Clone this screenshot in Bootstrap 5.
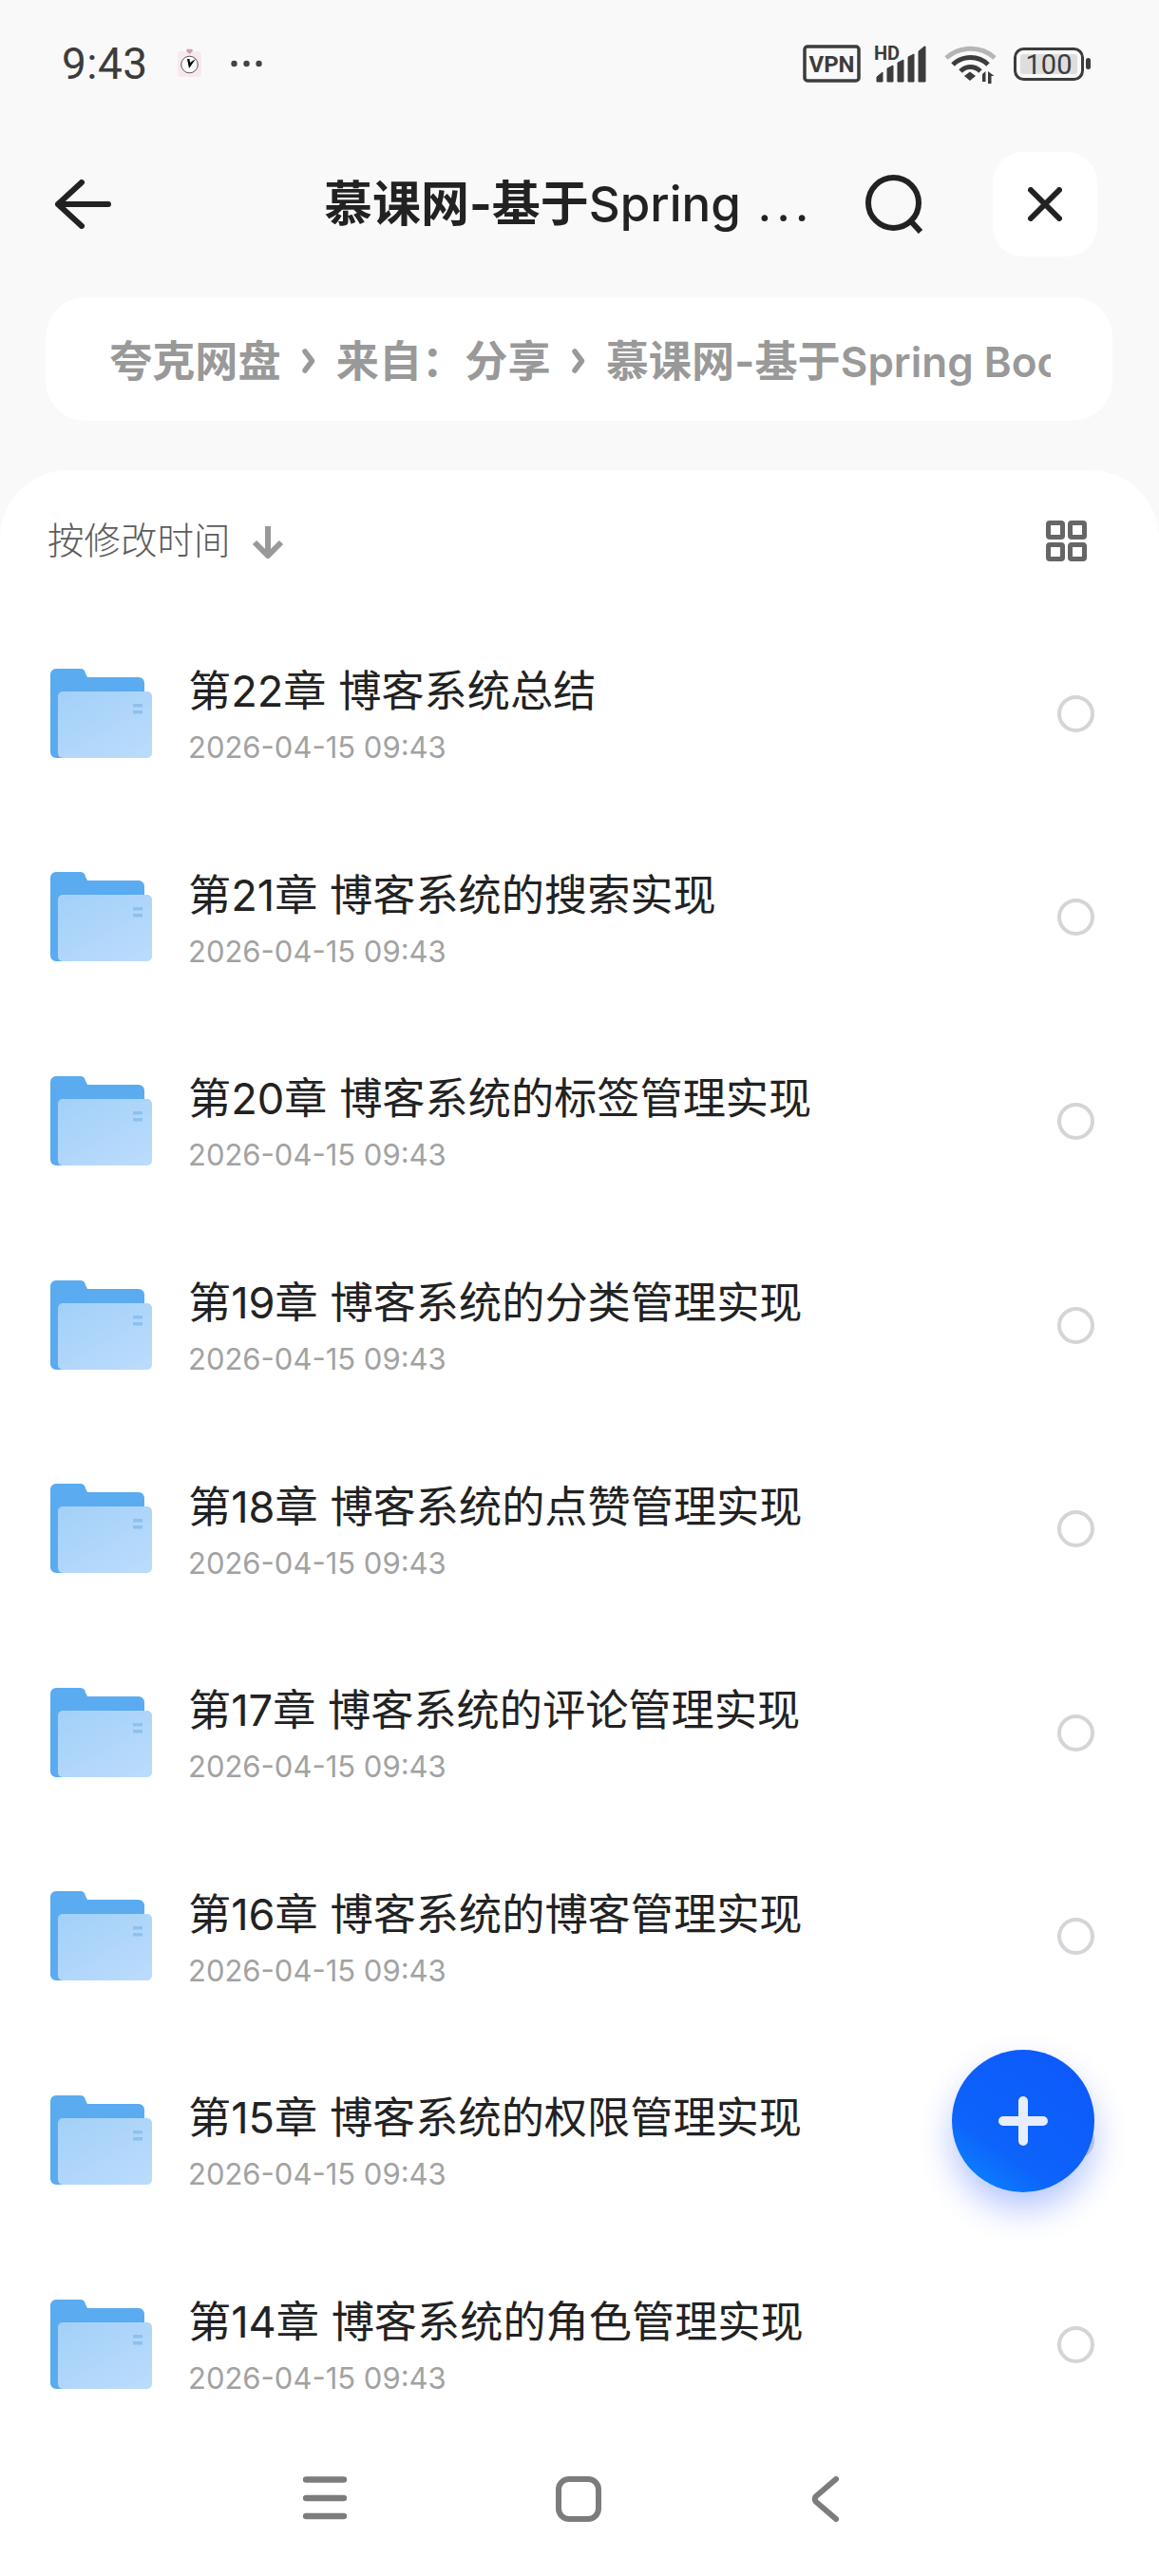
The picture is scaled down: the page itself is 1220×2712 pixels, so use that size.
<!DOCTYPE html>
<html lang="zh-CN">
<head>
    <meta charset="UTF-8">
    <meta name="viewport" content="width=device-width, initial-scale=1.0">
    <title>夸克网盘</title>
    <link href="https://cdn.jsdelivr.net/npm/bootstrap@5.3.0/dist/css/bootstrap.min.css" rel="stylesheet">
    <style>
        html, body {
            height: 2712px;
            overflow: hidden;
        }
        body {
            position: relative;
            background: #f9f9f9;
            font-family: Inter, "Noto Sans CJK SC", sans-serif;
            color: #222;
        }
        svg {
            display: block;
            flex: none;
        }
        .status-bar {
            height: 160px;
            padding: 0 72px 0 65px;
            color: #3c3c3c;
        }
        .status-time {
            font-family: Roboto, sans-serif;
            font-size: 46px;
            line-height: 1;
            padding-top: 44px;
            width: 122px;
            letter-spacing: .5px;
        }
        .status-stopwatch {
            margin-top: 51px;
        }
        .status-dots {
            margin: 63px 0 0 30px;
        }
        .status-icons {
            padding-top: 47px;
        }
        .status-icons text {
            font-family: Roboto, sans-serif;
        }
        .status-signal {
            margin: 0 0 0 14px;
        }
        .status-wifi {
            margin-left: 15px;
        }
        .status-battery {
            margin: 3px 0 0 18px;
        }
        .top-bar {
            height: 110px;
            padding: 0 65px 0 58px;
        }
        .top-title {
            width: 572px;
            margin-left: 224px;
            font-size: 51px;
            font-weight: 500;
            line-height: 110px;
            white-space: nowrap;
            color: #222;
        }
        .top-title b {
            font-weight: 700;
        }
        .top-title span {
            margin-left: 4px;
            letter-spacing: 5px;
            font-weight: 400;
        }
        .close-box {
            width: 110px;
            height: 110px;
            margin-left: 72px;
            background: #fff;
            border-radius: 32px;
        }
        .crumb-bar {
            height: 130px;
            margin: 43px 49px 0 48px;
            padding-left: 67px;
            background: #fff;
            border-radius: 42px;
        }
        .crumb-text {
            width: 991px;
            padding-top: 5px;
            overflow: hidden;
            white-space: nowrap;
            font-size: 45.200px;
            font-weight: 700;
            color: #999;
            gap: 22px;
        }
        .crumb-text i {
            font-style: normal;
            font-size: 44px;
            font-weight: 600;
        }
        .sheet {
            margin-top: 52px;
            height: 2217px;
            background: #fff;
            border-radius: 72px 72px 0 0;
        }
        .sort-row {
            height: 149px;
            padding: 0 76px 0 50px;
            font-size: 38.500px;
            font-weight: 300;
            color: #5c5c5c;
        }
        .sort-arrow {
            margin-left: 22px;
        }
        .file-row {
            height: 214.6px;
            padding: 0 68px 0 53px;
        }
        .file-info {
            margin-left: 37px;
            padding-top: 4px;
        }
        .file-title {
            font-size: 45.200px;
            line-height: 58px;
            color: #222;
        }
        .file-date {
            font-size: 31px;
            line-height: 40px;
            margin-top: 10px;
            color: #a2a2a2;
        }
        .pick-ring {
            width: 39px;
            height: 39px;
            border: 4px solid #d4d5d8;
            border-radius: 50%;
        }
        .bottom-nav {
            height: 137px;
            padding: 32px 335px 0 319px;
        }
        .add-btn {
            position: absolute;
            left: 1002px;
            top: 2158px;
            width: 150px;
            height: 150px;
            border-radius: 50%;
            background: linear-gradient(35deg, #0a8dff 0%, #0d63fb 32%, #0d58fb 100%);
            box-shadow: 0 18px 34px rgba(30, 80, 250, .32);
        }
    </style>
</head>
<body>
    <div class="status-bar d-flex justify-content-between">
        <div class="d-flex align-items-start">
            <div class="status-time">9:43</div>
            <svg class="status-stopwatch" width="26" height="30" viewBox="0 0 26 30">
                <rect x="0" y="3" width="25" height="27" rx="4" fill="#f8e9ee"/>
                <path d="M12.5 6 L9 2.5 a2.2 2.2 0 0 1 3.5-1.6 a2.2 2.2 0 0 1 3.5 1.6z" fill="#cf9db2"/>
                <circle cx="12.5" cy="17" r="8.8" fill="#fff" stroke="#555" stroke-width="1"/>
                <path d="M10 11 L12 21 L19 11 L13 15 L12.5 11z" fill="#000"/>
            </svg>
            <svg class="status-dots" width="33" height="8" viewBox="0 0 33 8">
                <circle cx="3.500" cy="4" r="3.200" fill="#444"/>
                <circle cx="16.500" cy="4" r="3.200" fill="#444"/>
                <circle cx="29.500" cy="4" r="3.200" fill="#444"/>
            </svg>
        </div>
        <div class="status-icons d-flex align-items-start">
            <svg width="61" height="40" viewBox="0 0 61 40">
                <rect x="2" y="2" width="57" height="36" rx="3" fill="none" stroke="#3c3c3c" stroke-width="3.500"/>
                <text x="30.500" y="28.500" text-anchor="middle" font-size="24" font-weight="700" fill="#3c3c3c">VPN</text>
            </svg>
            <svg class="status-signal" width="59" height="40" viewBox="0 0 59 40">
                <text x="0" y="16" font-size="20" font-weight="700" fill="#3c3c3c">HD</text>
                <path d="M3 39v-5l6-5v10z M14 39v-14l6-3v17z M25 39v-20l6-3v23z M36 39v-26l6-3v29z M47 39v-32l6-5h1v37z" fill="#3c3c3c" stroke="#3c3c3c" stroke-width="1" stroke-linejoin="round"/>
            </svg>
            <svg class="status-wifi" width="55" height="41" viewBox="0 0 55 41">
                <path d="M2 14 C16 1 39 1 53 14" fill="none" stroke="#b5b5b5" stroke-width="5"/>
                <path d="M9 21 C19 11 36 11 46 21" fill="none" stroke="#3c3c3c" stroke-width="5"/>
                <path d="M17 28 C23 22 32 22 38 28" fill="none" stroke="#3c3c3c" stroke-width="5"/>
                <path d="M21 33 L27 28.500 L33 33 L27 38z" fill="#3c3c3c"/>
                <path d="M40 31v8h3.500v-11z M46 28v13h3.500v-8l3 0z" fill="#3c3c3c"/>
            </svg>
            <svg class="status-battery" width="81" height="35" viewBox="0 0 81 35">
                <rect x="1.500" y="1.500" width="71" height="32" rx="9" fill="none" stroke="#3c3c3c" stroke-width="3"/>
                <rect x="7" y="7" width="60" height="21" rx="3" fill="#dedede"/>
                <text x="37" y="28" text-anchor="middle" font-size="29" fill="#3c3c3c">100</text>
                <rect x="76" y="11" width="5" height="12" rx="2.500" fill="#3c3c3c"/>
            </svg>
        </div>
    </div>

    <div class="top-bar d-flex align-items-center">
        <svg width="59" height="52" viewBox="0 0 59 52">
            <path d="M28 3 L3 26 L28 49 M3 26 H56" fill="none" stroke="#222" stroke-width="6" stroke-linecap="round" stroke-linejoin="round"/>
        </svg>
        <div class="top-title"><b>慕课网-基于</b>Spring <span>...</span></div>
        <svg width="62" height="62" viewBox="0 0 62 62">
            <circle cx="29.500" cy="29.500" r="26.500" fill="none" stroke="#222" stroke-width="6"/>
            <path d="M47 48 L58 60" fill="none" stroke="#222" stroke-width="6"/>
        </svg>
        <div class="close-box d-flex align-items-center justify-content-center">
            <svg width="36" height="36" viewBox="0 0 36 36">
                <path d="M3 3 L33 33 M33 3 L3 33" fill="none" stroke="#222" stroke-width="6" stroke-linecap="round"/>
            </svg>
        </div>
    </div>

    <div class="crumb-bar d-flex align-items-center">
        <div class="crumb-text d-flex align-items-center">
            <span>夸克网盘</span>
            <svg width="14" height="26" viewBox="0 0 14 26"><path d="M3 3 L10.500 13 L3 23" fill="none" stroke="#999" stroke-width="5.500" stroke-linecap="round" stroke-linejoin="round"/></svg>
            <span>来自：分享</span>
            <svg width="14" height="26" viewBox="0 0 14 26"><path d="M3 3 L10.500 13 L3 23" fill="none" stroke="#999" stroke-width="5.500" stroke-linecap="round" stroke-linejoin="round"/></svg>
            <span>慕课网-基于<i>Spring Boot</i></span>
        </div>
    </div>

    <div class="sheet">
        <div class="sort-row d-flex align-items-center justify-content-between">
            <div class="d-flex align-items-center">
                <span>按修改时间</span>
                <svg class="sort-arrow" width="34" height="36" viewBox="0 0 34 36">
                    <path d="M17 2 V32 M3 19 L17 33 L31 19" fill="none" stroke="#999" stroke-width="6"/>
                </svg>
            </div>
            <svg width="43" height="43" viewBox="0 0 43 43">
                <rect x="2.500" y="2.500" width="15" height="15" rx="1.500" fill="none" stroke="#666" stroke-width="5"/>
                <rect x="25.500" y="2.500" width="15" height="15" rx="1.500" fill="none" stroke="#666" stroke-width="5"/>
                <rect x="2.500" y="25.500" width="15" height="15" rx="1.500" fill="none" stroke="#666" stroke-width="5"/>
                <rect x="25.500" y="25.500" width="15" height="15" rx="1.500" fill="none" stroke="#666" stroke-width="5"/>
            </svg>
        </div>
        <div id="fileList"></div>
        <div class="bottom-nav d-flex justify-content-between align-items-start">
            <svg width="46" height="46" viewBox="0 0 46 46">
                <path d="M3 3.500 H43 M3 23 H43 M3 42 H43" fill="none" stroke="#7c7c7c" stroke-width="6.500" stroke-linecap="round"/>
            </svg>
            <svg width="48" height="48" viewBox="0 0 48 48">
                <rect x="3" y="3" width="42" height="42" rx="11" fill="none" stroke="#7c7c7c" stroke-width="6"/>
            </svg>
            <svg width="32" height="48" viewBox="0 0 32 48">
                <path d="M27 3 L6 21 Q3.500 24 6 27 L27 45" fill="none" stroke="#7c7c7c" stroke-width="6" stroke-linecap="round"/>
            </svg>
        </div>
    </div>

    <div class="add-btn d-flex align-items-center justify-content-center">
        <svg width="52" height="52" viewBox="0 0 52 52">
            <path d="M26 5 V47 M5 26 H47" fill="none" stroke="#e8edfb" stroke-width="10" stroke-linecap="round"/>
        </svg>
    </div>

    <script>
        const files = [
            '第22章 博客系统总结',
            '第21章 博客系统的搜索实现',
            '第20章 博客系统的标签管理实现',
            '第19章 博客系统的分类管理实现',
            '第18章 博客系统的点赞管理实现',
            '第17章 博客系统的评论管理实现',
            '第16章 博客系统的博客管理实现',
            '第15章 博客系统的权限管理实现',
            '第14章 博客系统的角色管理实现'
        ];

        const folderIcon = `
            <svg width="108" height="95" viewBox="0 0 108 95">
                <defs>
                    <linearGradient id="folderFront" x1="0" y1="0" x2="0.8" y2="1">
                        <stop offset="0" stop-color="#a3d0f8"/>
                        <stop offset="1" stop-color="#b9dbfc"/>
                    </linearGradient>
                </defs>
                <path d="M0 6 a6 6 0 0 1 6-6 H31 a6 6 0 0 1 6 5 l2 4 H93 a6 6 0 0 1 6 6 V94 H6 a6 6 0 0 1-6-6z" fill="#5aabf0"/>
                <rect x="8" y="24" width="99" height="70" rx="5" fill="url(#folderFront)"/>
                <rect x="87" y="37" width="10" height="3.500" fill="#8dc1ef"/>
                <rect x="87" y="44" width="10" height="3.500" fill="#8dc1ef"/>
            </svg>`;

        document.getElementById('fileList').innerHTML = files.map(name => `
            <div class="file-row d-flex align-items-center">
                ${folderIcon}
                <div class="file-info flex-grow-1">
                    <div class="file-title">${name}</div>
                    <div class="file-date">2026-04-15 09:43</div>
                </div>
                <div class="pick-ring"></div>
            </div>`).join('');
    </script>
    <script src="https://cdn.jsdelivr.net/npm/bootstrap@5.3.0/dist/js/bootstrap.bundle.min.js"></script>
</body>
</html>
